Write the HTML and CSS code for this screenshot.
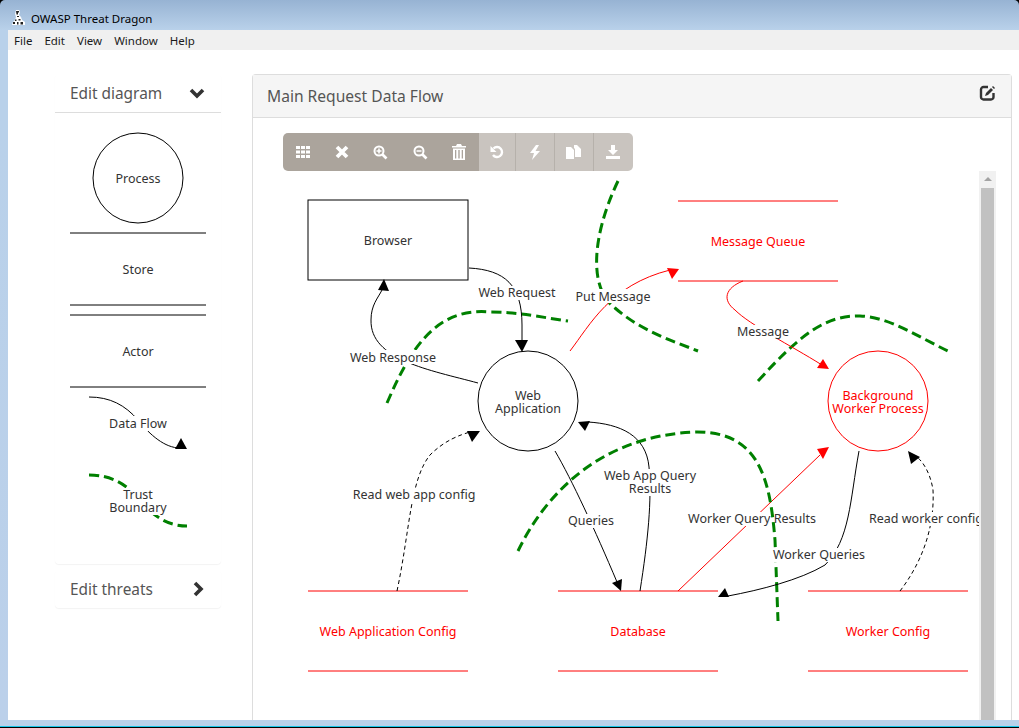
FILE: index.html
```html
<!DOCTYPE html>
<html>
  <head>
    <title>OWASP Threat Dragon</title>
    <meta charset="utf-8" />
    <link rel="stylesheet" href="styles.css">
  </head>
  <body>
    <div class="window">
      <div class="titlebar">
        <svg class="app-icon" width="15" height="16" viewBox="0 0 15 16">
          <path d="M5 0h3l1 2-1 3 2 2 1 3 3 2v3H1l1-3 2-2 1-3-1-3z" fill="#fff"/>
          <path d="M5 1h3v1.500H7v2H5.500zM6 6h2v1H6zM7.500 9h2v1.500h-2zM4 9.500h1.500V11H4zM2 12h2v2H2zM6 12h1.500v2.500H6zM9.500 12H12v2.500H9.500z" fill="#222"/>
        </svg>
        <span>OWASP Threat Dragon</span>
      </div>
      <div class="menubar">
        <span>File</span><span>Edit</span><span>View</span><span>Window</span><span>Help</span>
      </div>
      <div class="content">
        <div class="sidebar">
          <div class="side-box">
            <div class="side-head side-head-open">
              <span>Edit diagram</span>
              <svg width="16" height="12" viewBox="0 0 16 12"><path d="M2 3l6 6 6-6" fill="none" stroke="#333" stroke-width="3.600"/></svg>
            </div>
            <svg class="stencil" width="166" height="451" viewBox="55 113 166 451">
              <circle class="shape" cx="138" cy="178" r="45"/>
              <text class="lbl" x="138" y="183">Process</text>
              <line class="shape" x1="70" y1="233" x2="206" y2="233"/>
              <text class="lbl" x="138" y="274">Store</text>
              <line class="shape" x1="70" y1="305" x2="206" y2="305"/>
              <line class="shape" x1="70" y1="315" x2="206" y2="315"/>
              <text class="lbl" x="138" y="356">Actor</text>
              <line class="shape" x1="70" y1="387" x2="206" y2="387"/>
              <path class="flow" d="M89 397C110 397 125 405 138 420C150 435 165 448 180 448"/>
              <path class="head" d="M187 449L175 449L181 438z"/>
              <rect class="lbl-bg" x="107" y="416" width="62" height="15"/>
              <text class="lbl" x="138" y="428">Data Flow</text>
              <path class="boundary" d="M89 475C110 475 125 483 138 498C150 513 165 526 187 526"/>
              <rect class="lbl-bg" x="108" y="488" width="60" height="27"/>
              <text class="lbl" x="138" y="499">Trust</text>
              <text class="lbl" x="138" y="512">Boundary</text>
            </svg>
          </div>
          <div class="side-box side-head side-head-closed">
            <span>Edit threats</span>
            <svg width="12" height="16" viewBox="0 0 12 16"><path d="M3 2l6 6-6 6" fill="none" stroke="#333" stroke-width="3.600"/></svg>
          </div>
        </div>
        <div class="panel">
          <div class="panel-head">
            <span>Main Request Data Flow</span>
            <svg class="edit-icon" width="18" height="18" viewBox="0 0 18 18">
              <path d="M9 3H4.500A2.500 2.500 0 0 0 2 5.500V13a2.500 2.500 0 0 0 2.500 2.500H12A2.500 2.500 0 0 0 14.500 13V9" fill="none" stroke="#333" stroke-width="2.400"/>
              <path d="M6 12l1-3 5-5 2 2-5 5z" fill="#333"/>
              <path d="M14 2l2 2-1 1-2-2z" fill="#333"/>
            </svg>
          </div>
          <div class="panel-body">
            <div class="toolbar">
              <div class="tool tool-dark"><svg width="14" height="14" viewBox="0 0 14 14"><path fill="#fff" d="M0 1h4v3H0zM5 1h4v3H5zM10 1h4v3h-4zM0 5.500h4v3H0zM5 5.500h4v3H5zM10 5.500h4v3h-4zM0 10h4v3H0zM5 10h4v3H5zM10 10h4v3h-4z"/></svg></div>
              <div class="tool tool-dark"><svg width="14" height="14" viewBox="0 0 14 14"><path stroke="#fff" stroke-width="3.800" d="M2 2l10 10M12 2L2 12"/></svg></div>
              <div class="tool tool-dark"><svg width="15" height="15" viewBox="0 0 15 15"><circle cx="6" cy="6" r="4.500" fill="none" stroke="#fff" stroke-width="2"/><path stroke="#fff" stroke-width="2.600" d="M9.500 9.500l4 4"/><path stroke="#fff" stroke-width="1.600" d="M3.500 6h5M6 3.500v5"/></svg></div>
              <div class="tool tool-dark"><svg width="15" height="15" viewBox="0 0 15 15"><circle cx="6" cy="6" r="4.500" fill="none" stroke="#fff" stroke-width="2"/><path stroke="#fff" stroke-width="2.600" d="M9.500 9.500l4 4"/><path stroke="#fff" stroke-width="1.600" d="M3.500 6h5"/></svg></div>
              <div class="tool tool-dark"><svg width="14" height="16" viewBox="0 0 14 16"><path fill="#fff" d="M5 0h4l1 2h4v1.500H0V2h4zM1 4.500h12V16H1zM3 6v8.500h1.300V6zM6.300 6v8.500h1.400V6zM9.700 6v8.500H11V6z" fill-rule="evenodd"/></svg></div>
              <div class="tool tool-light tool-first"><svg width="14" height="14" viewBox="0 0 14 14"><path d="M3.500 3.500A5 5 0 1 1 3 10" fill="none" stroke="#fff" stroke-width="2.400"/><path fill="#fff" d="M0.500 1v6h6z"/></svg></div>
              <div class="tool tool-light"><svg width="12" height="15" viewBox="0 0 12 15"><path fill="#fff" d="M7 0L1 8h4l-2 7 8-9H6.500L10 0z"/></svg></div>
              <div class="tool tool-light"><svg width="15" height="14" viewBox="0 0 15 14"><path fill="#fff" d="M0 2h5l3 3v9H0zM8 0h3l4 4v8H9V4L8 3z"/></svg></div>
              <div class="tool tool-light"><svg width="14" height="14" viewBox="0 0 14 14"><path fill="#fff" d="M5 0h4v5h3L7 10 2 5h3zM0 11h14v3H0z"/></svg></div>
            </div>
            <svg class="diagram" width="726" height="602" viewBox="253 118 726 602">
              <!-- trust boundaries -->
              <path class="boundary" d="M387 403C410 350 435 307 490 312C520 312 545 318 568 321"/>
              <path class="boundary" d="M618 181C590 240 590 290 615 308C640 330 670 340 698 351"/>
              <path class="boundary" d="M758 381C800 335 825 315 860 316C890 317 920 338 948 351"/>

              <!-- processes and stores -->
              <rect class="shape" x="308" y="200" width="160" height="80"/>
              <text class="lbl" x="388" y="245">Browser</text>
              <circle class="shape" cx="528" cy="401" r="50"/>
              <text class="lbl" x="528" y="400">Web</text>
              <text class="lbl" x="528" y="413">Application</text>
              <circle class="shape-red" cx="878" cy="401" r="50"/>
              <text class="lbl lbl-red" x="878" y="400">Background</text>
              <text class="lbl lbl-red" x="878" y="413">Worker Process</text>

              <line class="shape-red" x1="678" y1="201" x2="838" y2="201"/>
              <line class="shape-red" x1="678" y1="281" x2="838" y2="281"/>
              <text class="lbl lbl-red" x="758" y="246">Message Queue</text>
              <line class="shape-red" x1="308" y1="591" x2="468" y2="591"/>
              <line class="shape-red" x1="308" y1="671" x2="468" y2="671"/>
              <text class="lbl lbl-red" x="388" y="636">Web Application Config</text>
              <line class="shape-red" x1="558" y1="591" x2="718" y2="591"/>
              <line class="shape-red" x1="558" y1="671" x2="718" y2="671"/>
              <text class="lbl lbl-red" x="638" y="636">Database</text>
              <line class="shape-red" x1="808" y1="591" x2="968" y2="591"/>
              <line class="shape-red" x1="808" y1="671" x2="968" y2="671"/>
              <text class="lbl lbl-red" x="888" y="636">Worker Config</text>

              <!-- flows -->
              <path class="flow" d="M469 268C505 270 522 285 522 325V342"/>
              <path class="head" d="M522 352L515 340L528 340z"/>
              <rect class="lbl-bg" x="477" y="286" width="80" height="14"/>
              <text class="lbl" x="517" y="297">Web Request</text>

              <path class="flow" d="M478 383C430 370 370 360 371 320C371 305 378 298 382 290"/>
              <path class="head" d="M384 279L389 291L378 290z"/>
              <rect class="lbl-bg" x="350" y="350" width="87" height="14"/>
              <text class="lbl" x="393" y="362">Web Response</text>

              <path class="flow-red" d="M570 351C590 325 610 285 670 270"/>
              <path class="head-red" d="M679 269L667 268L672 279z"/>
              <rect class="lbl-bg" x="575" y="289" width="76" height="14"/>
              <text class="lbl" x="613" y="301">Put Message</text>

              <path class="flow-red" d="M743 281C725 288 722 300 735 310C750 325 790 345 822 365"/>
              <path class="head-red" d="M829 369L823 359L817 368z"/>
              <rect class="lbl-bg" x="737" y="325" width="53" height="14"/>
              <text class="lbl" x="763" y="336">Message</text>

              <path class="flow" d="M555 451C572 480 595 530 617 582"/>
              <path class="head" d="M621 591L612 583L622 579z"/>
              <rect class="lbl-bg" x="567" y="514" width="48" height="14"/>
              <text class="lbl" x="591" y="525">Queries</text>

              <path class="flow" d="M640 591C648 540 652 500 649 467C646 435 620 424 588 422"/>
              <path class="head" d="M578 422L590 421L585 431z"/>
              <rect class="lbl-bg" x="603" y="469" width="94" height="27"/>
              <text class="lbl" x="650" y="480">Web App Query</text>
              <text class="lbl" x="650" y="493">Results</text>

              <path class="flow-red" d="M678 591L820 455"/>
              <path class="head-red" d="M829 447L817 449L823 459z"/>
              <rect class="lbl-bg" x="687" y="512" width="130" height="14"/>
              <text class="lbl" x="752" y="523">Worker Query Results</text>

              <path class="boundary" d="M518 551C545 495 600 435 697 432C760 432 770 480 775 540L778 621"/>

              <path class="flow" d="M859 451C850 500 850 540 825 565C800 580 760 590 728 596"/>
              <path class="head" d="M718 597L729 597L725 588z"/>
              <rect class="lbl-bg" x="773" y="548" width="93" height="14"/>
              <text class="lbl" x="819" y="559">Worker Queries</text>

              <path class="flow-dash" d="M900 591C920 565 935 530 933 490C930 470 920 458 915 456"/>
              <path class="head" d="M908 451L920 457L911 464z"/>
              <rect class="lbl-bg" x="870" y="512" width="112" height="14"/>
              <text class="lbl" x="926" y="523">Read worker config</text>

              <path class="flow-dash" d="M397 591C410 530 410 480 430 455C445 440 460 435 470 432"/>
              <path class="head" d="M480 431L467 431L472 442z"/>
              <rect class="lbl-bg" x="353" y="488" width="122" height="14"/>
              <text class="lbl" x="414" y="499">Read web app config</text>
            </svg>
            <div class="scrollbar">
              <div class="scroll-up"></div>
              <div class="scroll-thumb"></div>
            </div>
          </div>
        </div>
      </div>
      <div class="bottom-edge"></div>
    </div>
  </body>
</html>
```

FILE: styles.css
```css
html,
body {
  margin: 0;
  padding: 0;
  background-color: #000;
}
.window {
  width: 1019px;
  height: 728px;
  overflow: hidden;
  display: flex;
  flex-direction: column;
  box-sizing: border-box;
  padding: 2px 0 0 2px;
  border-radius: 5px 5px 0 0;
  background: linear-gradient(#97b3d3, #b9d1ea 30px, #b9d1ea 110px, #bbd0ea);
  font-family: "Noto Sans", sans-serif;
}
.titlebar {
  height: 28px;
  flex: none;
  box-sizing: border-box;
  display: flex;
  align-items: center;
  gap: 5px;
  padding: 4px 0 0 9px;
  font-size: 11.5px;
  color: #000;
}
.app-icon {
  flex: none;
}
.menubar {
  height: 20px;
  flex: none;
  margin-left: 6px;
  padding-left: 6px;
  display: flex;
  align-items: center;
  gap: 12px;
  background-color: #f0f0f0;
  font-size: 11.5px;
  color: #1a1a1a;
}
.content {
  flex: 1;
  margin-left: 6px;
  min-height: 0;
  display: flex;
  background-color: #fff;
  padding: 24px 7px 0 47px;
  gap: 31px;
  color: #555;
}
.sidebar {
  width: 166px;
  flex: none;
}
.side-box {
  border-radius: 4px;
  box-shadow: 0 1px 1px rgba(0, 0, 0, 0.05);
}
.side-head {
  display: flex;
  align-items: center;
  justify-content: space-between;
  font-size: 15.4px;
  padding: 0 16px 0 15px;
  box-sizing: border-box;
}
.side-head-open {
  height: 39px;
  border-bottom: 1px solid #ddd;
}
.side-head-closed {
  height: 38px;
  margin-top: 6px;
  padding-right: 17px;
}
.stencil {
  display: block;
}
.panel {
  flex: 1;
  min-width: 0;
  display: flex;
  flex-direction: column;
  border: 1px solid #ddd;
  border-bottom: 0;
  border-radius: 4px 4px 0 0;
}
.panel-head {
  height: 43px;
  flex: none;
  box-sizing: border-box;
  border-bottom: 1px solid #ddd;
  background-color: #f5f5f5;
  display: flex;
  align-items: center;
  justify-content: space-between;
  padding: 0 14px 1px 14px;
  font-size: 15.6px;
}
.edit-icon {
  margin-bottom: 5px;
}
.panel-body {
  flex: 1;
  min-height: 0;
  position: relative;
  display: flex;
  align-items: flex-start;
}
.toolbar {
  position: absolute;
  left: 30px;
  top: 15px;
  height: 38px;
  display: flex;
  border-radius: 5px;
  overflow: hidden;
}
.tool {
  display: flex;
  align-items: center;
  justify-content: center;
}
.tool-dark {
  width: 39.2px;
  background-color: #aba49c;
}
.tool-light {
  width: 39px;
  box-sizing: border-box;
  background-color: #c9c4bf;
  border-right: 1px solid #b6b1ab;
}
.tool-first {
  width: 37px;
}
.tool-light:last-child {
  border-right: 0;
}
.diagram {
  display: block;
  flex: none;
}
.scrollbar {
  width: 17px;
  height: 549px;
  flex: none;
  margin-top: 53px;
  box-sizing: border-box;
  padding: 0 2px;
  background-color: #f1f1f1;
}
.scroll-up {
  height: 17px;
  position: relative;
}
.scroll-up::after {
  content: "";
  position: absolute;
  left: 3px;
  top: 6px;
  border: 4px solid transparent;
  border-top: 0;
  border-bottom: 4px solid #a3a3a3;
}
.scroll-thumb {
  height: 532px;
  background-color: #c1c1c1;
}
.bottom-edge {
  height: 8px;
  flex: none;
  margin-left: -2px;
  box-sizing: border-box;
  background-color: #17c5e8;
  border-top: 6px solid #b9d1ea;
  border-bottom: 1px solid #000;
}
.shape {
  fill: none;
  stroke: #000;
}
.shape-red {
  fill: none;
  stroke: #f00;
}
.flow,
.flow-red,
.flow-dash {
  fill: none;
  stroke: #000;
}
.flow-red {
  stroke: #f00;
}
.flow-dash {
  stroke-dasharray: 4 3;
}
.head {
  fill: #000;
}
.head-red {
  fill: #f00;
}
.boundary {
  fill: none;
  stroke: #008000;
  stroke-width: 3;
  stroke-dasharray: 10 5;
}
.lbl {
  font-family: "Noto Sans", sans-serif;
  font-size: 12.5px;
  text-anchor: middle;
  fill: #333;
}
.lbl-red {
  fill: #f00;
}
.lbl-bg {
  fill: #fff;
}
```
